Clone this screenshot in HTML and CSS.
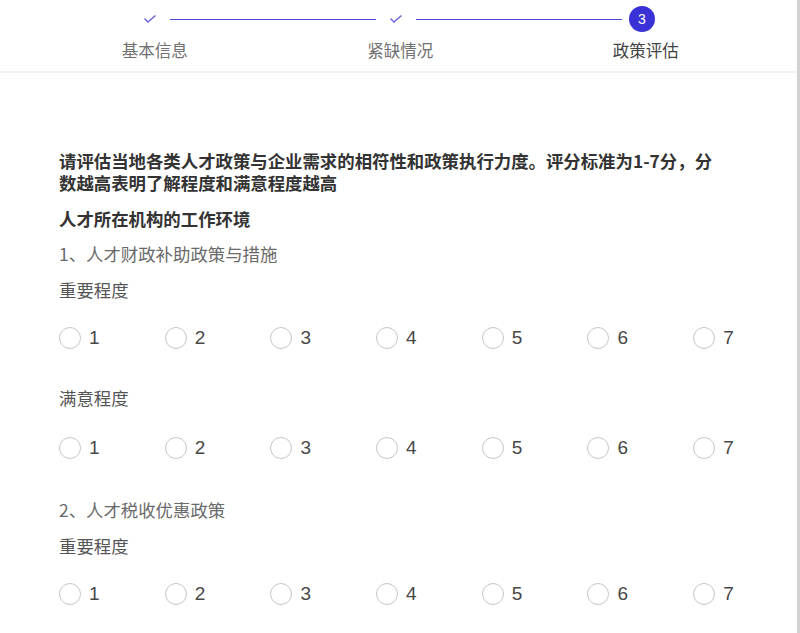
FILE: index.html
```html
<!DOCTYPE html>
<html lang="zh">
<head>
<meta charset="utf-8">
<link rel="stylesheet" href="styles.css">
</head>
<body>
<div class="page">
  <header class="steps">
    <div class="steps-head">
      <span class="step-icon done"><svg width="14" height="10" viewBox="0 0 14 10"><path d="M1.5 4.5 L5 8 L12.5 1.5" fill="none" stroke="#6a63e0" stroke-width="1.4"/></svg></span>
      <span class="step-line"></span>
      <span class="step-icon done"><svg width="14" height="10" viewBox="0 0 14 10"><path d="M1.5 4.5 L5 8 L12.5 1.5" fill="none" stroke="#6a63e0" stroke-width="1.4"/></svg></span>
      <span class="step-line"></span>
      <span class="step-icon current">3</span>
    </div>
    <div class="steps-labels">
      <span class="step-label">基本信息</span>
      <span class="step-label">紧缺情况</span>
      <span class="step-label active">政策评估</span>
    </div>
  </header>

  <main class="content">
    <p class="intro">请评估当地各类人才政策与企业需求的相符性和政策执行力度。评分标准为1-7分，分数越高表明了解程度和满意程度越高</p>
    <h2 class="section-title">人才所在机构的工作环境</h2>

    <section class="question">
      <p class="q-title">1、人才财政补助政策与措施</p>
      <p class="q-label">重要程度</p>
      <div class="radios">
        <label class="radio"><span class="circle"></span><span class="num">1</span></label>
        <label class="radio"><span class="circle"></span><span class="num">2</span></label>
        <label class="radio"><span class="circle"></span><span class="num">3</span></label>
        <label class="radio"><span class="circle"></span><span class="num">4</span></label>
        <label class="radio"><span class="circle"></span><span class="num">5</span></label>
        <label class="radio"><span class="circle"></span><span class="num">6</span></label>
        <label class="radio"><span class="circle"></span><span class="num">7</span></label>
      </div>
      <p class="q-label">满意程度</p>
      <div class="radios">
        <label class="radio"><span class="circle"></span><span class="num">1</span></label>
        <label class="radio"><span class="circle"></span><span class="num">2</span></label>
        <label class="radio"><span class="circle"></span><span class="num">3</span></label>
        <label class="radio"><span class="circle"></span><span class="num">4</span></label>
        <label class="radio"><span class="circle"></span><span class="num">5</span></label>
        <label class="radio"><span class="circle"></span><span class="num">6</span></label>
        <label class="radio"><span class="circle"></span><span class="num">7</span></label>
      </div>
    </section>

    <section class="question">
      <p class="q-title">2、人才税收优惠政策</p>
      <p class="q-label">重要程度</p>
      <div class="radios">
        <label class="radio"><span class="circle"></span><span class="num">1</span></label>
        <label class="radio"><span class="circle"></span><span class="num">2</span></label>
        <label class="radio"><span class="circle"></span><span class="num">3</span></label>
        <label class="radio"><span class="circle"></span><span class="num">4</span></label>
        <label class="radio"><span class="circle"></span><span class="num">5</span></label>
        <label class="radio"><span class="circle"></span><span class="num">6</span></label>
        <label class="radio"><span class="circle"></span><span class="num">7</span></label>
      </div>
    </section>
  </main>
</div>
</body>
</html>
```

FILE: styles.css
```css
* { box-sizing: border-box; }
html, body { margin: 0; padding: 0; background: #fff; }
body {
  font-family: "Noto Sans CJK SC", "Noto Sans", sans-serif;
  color: #333;
  overflow: hidden;
}
.page {
  width: 800px;
  height: 633px;
  border-right: 3px solid #d2d2d2;
  overflow: hidden;
}
.steps {
  padding-top: 6px;
  padding-bottom: 9px;
  border-bottom: 2px solid #f2f2f2;
}
.steps-head {
  display: flex;
  align-items: center;
  padding-left: 138px;
  height: 26px;
}
.step-icon {
  width: 24px;
  height: 24px;
  display: flex;
  align-items: center;
  justify-content: center;
  flex: none;
}
.step-icon.current {
  width: 26px;
  height: 26px;
  margin-left: -1px;
  border-radius: 50%;
  background: #3a31d6;
  color: #fff;
  font-family: "Liberation Sans", sans-serif;
  font-size: 14px;
}
.step-line {
  width: 206px;
  height: 1px;
  background: #4c46d2;
  margin: 0 8px;
  flex: none;
}
.steps-labels {
  display: grid;
  grid-template-columns: repeat(3, 245.5px);
  padding-left: 32px;
  margin-top: 6px;
  line-height: 24px;
  font-size: 16.5px;
}
.step-label {
  text-align: center;
  color: #707070;
}
.step-label.active { color: #444; }

.content {
  padding-left: 59px;
  padding-top: 77px;
  font-size: 17.4px;
  line-height: 22px;
}
.intro {
  margin: 0;
  width: 665px;
  font-weight: bold;
  color: #333;
}
.section-title {
  margin: 14px 0 0;
  font-size: 17.4px;
  line-height: 22px;
  font-weight: bold;
  color: #333;
}
.question { margin-top: 13px; }
.question + .question { margin-top: 40px; }
.q-title {
  margin: 0;
  color: #6a6a6a;
}
.q-label {
  margin: 14px 0 0;
  color: #555;
}
.radios + .q-label { margin-top: 38px; }
.radios {
  display: grid;
  grid-template-columns: repeat(7, 105.7px);
  margin-top: 26px;
  height: 22px;
}
.q-label + .radios + .q-label + .radios { margin-top: 28px; }
.radio {
  display: flex;
  align-items: center;
  gap: 8px;
}
.circle {
  width: 22px;
  height: 22px;
  border-radius: 50%;
  border: 1.5px solid #c6c6c6;
  flex: none;
}
.num {
  font-family: "Liberation Sans", Arial, sans-serif;
  font-size: 19px;
  color: #484848;
}
```
